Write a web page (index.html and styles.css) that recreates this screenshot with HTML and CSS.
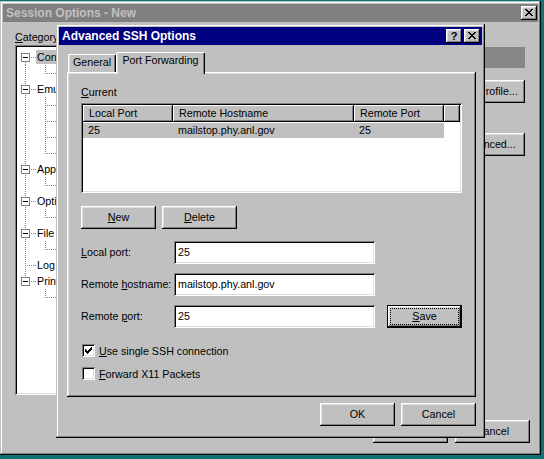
FILE: index.html
```html
<!DOCTYPE html>
<html>
<head>
<meta charset="utf-8">
<title>Advanced SSH Options</title>
<link rel="stylesheet" href="styles.css">
</head>
<body>
<div class="desktop">
  <div class="win win-back">
    <div class="titlebar inactive">
      <span class="title-text">Session Options - New</span>
      <span class="tbtn last"><svg width="16" height="14" viewBox="0 0 16 14"><path class="px" d="M4 3h2v1h-2zM10 3h2v1h-2zM5 4h2v1h-2zM9 4h2v1h-2zM6 5h4v1h-4zM7 6h2v1h-2zM6 7h4v1h-4zM5 8h2v1h-2zM9 8h2v1h-2zM4 9h2v1h-2zM10 9h2v1h-2z"/></svg></span>
    </div>
    <div class="win-body">
      <div class="win-main">
        <div class="cat-col">
          <div class="lbl"><u>C</u>ategory:</div>
          <div class="tree">
            <div class="trow"><svg width="19" height="16"><path class="d" d="M8.5 13V16M14 8.5H19"/><rect class="bx" x="4.5" y="4.5" width="8" height="8"/><path class="m" d="M6 8.5H11"/></svg><span class="tl sel">Connection</span></div>
            <div class="trow"><svg width="39" height="16"><path class="d" d="M8.5 0V16M28.5 0V9M30 8.5H39"/></svg><span class="tl">Port Forwarding</span></div>
            <div class="trow"><svg width="19" height="16"><path class="d" d="M8.5 0V16M14 8.5H19"/><rect class="bx" x="4.5" y="4.5" width="8" height="8"/><path class="m" d="M6 8.5H11"/></svg><span class="tl">Emulation</span></div>
            <div class="trow"><svg width="39" height="16"><path class="d" d="M8.5 0V16M28.5 0V16M30 8.5H39"/></svg><span class="tl">Modes</span></div>
            <div class="trow"><svg width="39" height="16"><path class="d" d="M8.5 0V16M28.5 0V16M30 8.5H39"/></svg><span class="tl">Emacs</span></div>
            <div class="trow"><svg width="39" height="16"><path class="d" d="M8.5 0V16M28.5 0V16M30 8.5H39"/></svg><span class="tl">Mapped Keys</span></div>
            <div class="trow"><svg width="39" height="16"><path class="d" d="M8.5 0V16M28.5 0V9M30 8.5H39"/></svg><span class="tl">Advanced</span></div>
            <div class="trow"><svg width="19" height="16"><path class="d" d="M8.5 0V16M14 8.5H19"/><rect class="bx" x="4.5" y="4.5" width="8" height="8"/><path class="m" d="M6 8.5H11"/></svg><span class="tl">Appearance</span></div>
            <div class="trow"><svg width="39" height="16"><path class="d" d="M8.5 0V16M28.5 0V9M30 8.5H39"/></svg><span class="tl">Window</span></div>
            <div class="trow"><svg width="19" height="16"><path class="d" d="M8.5 0V16M14 8.5H19"/><rect class="bx" x="4.5" y="4.5" width="8" height="8"/><path class="m" d="M6 8.5H11"/></svg><span class="tl">Options</span></div>
            <div class="trow"><svg width="39" height="16"><path class="d" d="M8.5 0V16M28.5 0V9M30 8.5H39"/></svg><span class="tl">Advanced</span></div>
            <div class="trow"><svg width="19" height="16"><path class="d" d="M8.5 0V16M14 8.5H19"/><rect class="bx" x="4.5" y="4.5" width="8" height="8"/><path class="m" d="M6 8.5H11"/></svg><span class="tl">File Transfer</span></div>
            <div class="trow"><svg width="39" height="16"><path class="d" d="M8.5 0V16M28.5 0V9M30 8.5H39"/></svg><span class="tl">Xmodem/Zmodem</span></div>
            <div class="trow"><svg width="19" height="16"><path class="d" d="M8.5 0V16M10 8.5H19"/></svg><span class="tl">Log File</span></div>
            <div class="trow"><svg width="19" height="16"><path class="d" d="M8.5 0V4M14 8.5H19"/><rect class="bx" x="4.5" y="4.5" width="8" height="8"/><path class="m" d="M6 8.5H11"/></svg><span class="tl">Printing</span></div>
            <div class="trow"><svg width="39" height="16"><path class="d" d="M28.5 0V9M30 8.5H39"/></svg><span class="tl">Advanced</span></div>
          </div>
        </div>
        <div class="side-col">
          <div class="graybox"></div>
          <div class="btn side-profile">Edit Profile...</div>
          <div class="btn side-adv">Advanced...</div>
        </div>
      </div>
      <div class="win-foot">
        <div class="btn">OK</div>
        <div class="btn">Cancel</div>
      </div>
    </div>
  </div>

  <div class="win dlg">
    <div class="titlebar active">
      <span class="title-text">Advanced SSH Options</span>
      <span class="tbtn help">?</span>
      <span class="tbtn last"><svg width="16" height="14" viewBox="0 0 16 14"><path class="px" d="M4 3h2v1h-2zM10 3h2v1h-2zM5 4h2v1h-2zM9 4h2v1h-2zM6 5h4v1h-4zM7 6h2v1h-2zM6 7h4v1h-4zM5 8h2v1h-2zM9 8h2v1h-2zM4 9h2v1h-2zM10 9h2v1h-2z"/></svg></span>
    </div>
    <div class="dlg-body">
      <div class="tabs">
        <div class="tab general">General</div>
        <div class="tab sel">Port Forwarding</div>
      </div>
      <div class="panel">
        <div class="lbl"><u>C</u>urrent</div>
        <div class="list">
          <div class="lv-head">
            <div class="c1">Local Port</div>
            <div class="c2">Remote Hostname</div>
            <div class="c3">Remote Port</div>
            <div class="c4"></div>
          </div>
          <div class="lv-row">
            <div class="c1 hl">25</div>
            <div class="c2 hl">mailstop.phy.anl.gov</div>
            <div class="c3 hl">25</div>
            <div class="c4"></div>
          </div>
        </div>
        <div class="btnrow">
          <div class="btn"><span><u>N</u>ew</span></div>
          <div class="btn"><span><u>D</u>elete</span></div>
        </div>
        <div class="form">
          <div class="flbl"><u>L</u>ocal port:</div>
          <div class="field">25</div>
          <div></div>
          <div class="flbl">Remote <u>h</u>ostname:</div>
          <div class="field">mailstop.phy.anl.gov</div>
          <div></div>
          <div class="flbl">Remote <u>p</u>ort:</div>
          <div class="field">25</div>
          <div class="btn def save"><span class="focus"><span><u>S</u>ave</span></span></div>
        </div>
        <div class="checks">
          <div class="chk">
            <span class="cb"><svg width="13" height="13" viewBox="0 0 13 13"><path class="px" d="M9 3h1v1h-1zM8 4h2v1h-2zM3 5h1v1h-1zM7 5h3v1h-3zM3 6h2v1h-2zM6 6h3v1h-3zM3 7h5v1h-5zM4 8h3v1h-3zM5 9h1v1h-1z"/></svg></span>
            <span><u>U</u>se single SSH connection</span>
          </div>
          <div class="chk">
            <span class="cb"></span>
            <span><u>F</u>orward X11 Packets</span>
          </div>
        </div>
      </div>
      <div class="dlg-foot">
        <div class="btn">OK</div>
        <div class="btn">Cancel</div>
      </div>
    </div>
  </div>
</div>
</body>
</html>
```

FILE: styles.css
```css
* { box-sizing: border-box; }
html, body { margin: 0; padding: 0; }
body {
  font-family: "Liberation Sans", Arial, sans-serif;
  font-size: 10.7px;
  color: #000;
  background: #008080;
}
.desktop {
  position: relative;
  width: 544px;
  height: 459px;
  overflow: hidden;
  background: #0a7474;
}

/* windows */
.win {
  position: absolute;
  display: flex;
  flex-direction: column;
  padding: 3px;
  background: #c0c0c0;
  box-shadow: inset -1px -1px #000, inset 1px 1px #c0c0c0, inset -2px -2px #808080, inset 2px 2px #fff;
}
.win-back { left: 0; top: 1px; width: 541px; height: 454px; }
.dlg { left: 56px; top: 24px; width: 429px; height: 414px; z-index: 2; }

.titlebar { flex: none; height: 18px; display: flex; align-items: flex-start; }
.titlebar.inactive { background: #808080; color: #c0c0c0; }
.titlebar.active { background: #000080; color: #fff; }
.title-text {
  flex: 1;
  font-weight: bold;
  font-size: 12px;
  line-height: 18px;
  padding-left: 3px;
  white-space: nowrap;
}
.tbtn {
  flex: none;
  width: 16px;
  height: 14px;
  margin-top: 2px;
  background: #c0c0c0;
  color: #000;
  display: flex;
  align-items: center;
  justify-content: center;
  box-shadow: inset -1px -1px #000, inset 1px 1px #fff, inset -2px -2px #808080, inset 2px 2px #dfdfdf;
}
.tbtn svg { display: block; }
.tbtn + .tbtn { margin-left: 2px; }
.tbtn.last { margin-right: 2px; }
.win-back .tbtn.last { margin-right: 1px; }
.help { font-weight: bold; font-size: 11px; line-height: 14px; padding-bottom: 1px; }
.px { fill: #000; shape-rendering: crispEdges; }

/* generic controls */
.lbl { line-height: 13px; white-space: nowrap; }
.btn {
  flex: none;
  width: 75px;
  height: 23px;
  display: flex;
  align-items: center;
  justify-content: center;
  line-height: 13px;
  white-space: nowrap;
  background: #c0c0c0;
  box-shadow: inset -1px -1px #000, inset 1px 1px #fff, inset -2px -2px #808080, inset 2px 2px #dfdfdf;
}
.btn.def {
  border: 1px solid #000;
  padding: 2px;
}
.focus {
  flex: 1;
  align-self: stretch;
  border: 1px dotted #000;
  display: flex;
  align-items: center;
  justify-content: center;
}

/* background window body */
.win-body {
  flex: 1;
  display: flex;
  flex-direction: column;
  padding: 9px 8px 9px 12px;
  min-height: 0;
}
.win-main { flex: 1; display: flex; min-height: 0; }
.cat-col { width: 190px; display: flex; flex-direction: column; }
.tree {
  flex: 1;
  margin-top: 1px;
  background: #fff;
  padding: 4px 2px 2px 2px;
  overflow: hidden;
  box-shadow: inset 1px 1px #808080, inset -1px -1px #fff, inset 2px 2px #000, inset -2px -2px #dfdfdf;
}
.trow { height: 16px; display: flex; align-items: center; white-space: nowrap; }
.trow svg { flex: none; display: block; }
.tl { line-height: 14px; padding: 0 1px; }
.tl.sel { background: #c0c0c0; }
.d { fill: none; stroke: #808080; stroke-dasharray: 1 1; shape-rendering: crispEdges; }
.bx { fill: #fff; stroke: #808080; shape-rendering: crispEdges; }
.m { stroke: #000; shape-rendering: crispEdges; }

.side-col {
  margin-left: auto;
  margin-right: 5px;
  width: 75px;
  padding-top: 16px;
  display: flex;
  flex-direction: column;
}
.graybox { height: 21px; background: #878787; }
.side-profile { margin-top: 12px; }
.side-adv { margin-top: 30px; }
.win-foot {
  flex: none;
  display: flex;
  justify-content: flex-end;
  gap: 7px;
  margin-top: 25px;
}

/* dialog body */
.dlg-body {
  flex: 1;
  display: flex;
  flex-direction: column;
  padding: 7px 6px 8px 8px;
}
.tabs {
  flex: none;
  height: 20px;
  display: flex;
  align-items: flex-end;
  padding-left: 1px;
}
.tab {
  height: 18px;
  padding-top: 1px;
  line-height: 13px;
  text-align: center;
  white-space: nowrap;
  background: #c0c0c0;
  border-top: 1px solid #fff;
  border-left: 1px solid #fff;
  border-right: 1px solid #000;
  border-radius: 2px 2px 0 0;
  box-shadow: inset -1px 0 #808080, inset 1px 0 #dfdfdf;
}
.tab.general { width: 48px; }
.tab.sel {
  width: 89px;
  height: 22px;
  margin-bottom: -2px;
  position: relative;
  z-index: 1;
}
.panel {
  flex: none;
  height: 325px;
  padding: 14px 14px 0 14px;
  display: flex;
  flex-direction: column;
  align-items: flex-start;
  box-shadow: inset -1px -1px #000, inset 1px 1px #fff, inset -2px -2px #808080, inset 2px 2px #dfdfdf;
}
.list {
  width: 381px;
  height: 90px;
  margin-top: 4px;
  padding: 2px;
  background: #fff;
  box-shadow: inset 1px 1px #808080, inset -1px -1px #fff, inset 2px 2px #000, inset -2px -2px #dfdfdf;
}
.lv-head, .lv-row { display: flex; }
.lv-head { height: 17px; }
.lv-row { height: 15px; margin-top: 1px; }
.c1 { width: 90px; }
.c2 { width: 181px; }
.c3 { width: 90px; }
.c4 { flex: 1; }
.lv-head > div {
  line-height: 17px;
  padding-left: 6px;
  white-space: nowrap;
  background: #c0c0c0;
  box-shadow: inset -1px -1px #000, inset 1px 1px #fff, inset -2px -2px #808080;
}
.lv-row > div { line-height: 15px; padding-left: 5px; white-space: nowrap; }
.lv-row .hl { background: #c0c0c0; }

.btnrow { display: flex; gap: 6px; margin-top: 13px; }

.form {
  margin-top: 12px;
  display: grid;
  grid-template-columns: 93px 201px 87px;
  grid-auto-rows: 23px;
  row-gap: 9px;
}
.flbl { align-self: center; line-height: 13px; white-space: nowrap; }
.field {
  background: #fff;
  padding: 0 4px;
  line-height: 23px;
  white-space: nowrap;
  box-shadow: inset 1px 1px #808080, inset -1px -1px #fff, inset 2px 2px #000, inset -2px -2px #dfdfdf;
}
.save { margin-left: 12px; }

.checks { margin-top: 14px; display: flex; flex-direction: column; gap: 6px; }
.chk { height: 17px; display: flex; align-items: center; white-space: nowrap; }
.cb {
  flex: none;
  width: 13px;
  height: 13px;
  margin-left: 1px;
  margin-right: 4px;
  background: #fff;
  box-shadow: inset 1px 1px #808080, inset -1px -1px #fff, inset 2px 2px #000, inset -2px -2px #dfdfdf;
}
.cb svg { display: block; }

.dlg-foot {
  flex: none;
  display: flex;
  justify-content: flex-end;
  gap: 6px;
  margin-top: 6px;
}
```
